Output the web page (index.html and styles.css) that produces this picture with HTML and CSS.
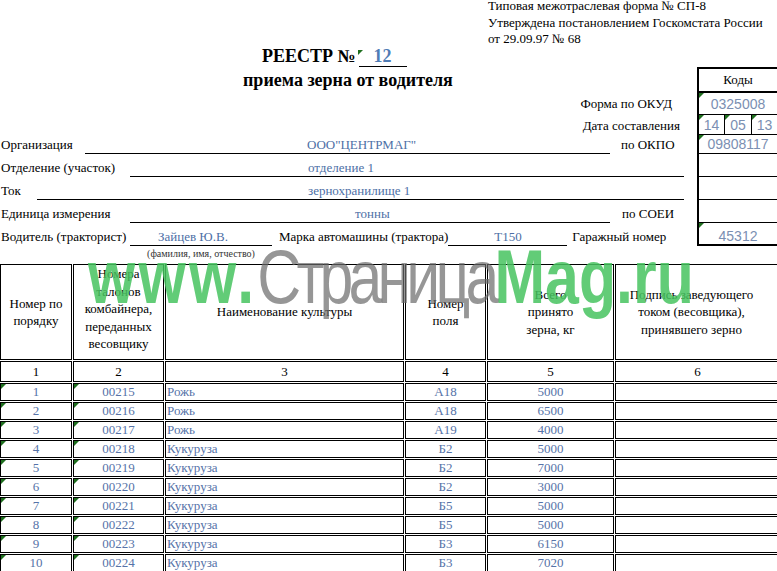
FILE: index.html
```html
<!DOCTYPE html>
<html lang="ru">
<head>
<meta charset="utf-8">
<title>Реестр приема зерна</title>
<link rel="stylesheet" href="styles.css">
</head>
<body>
<div class="page">
  <div class="approval">Типовая межотраслевая форма № СП-8<br>Утверждена постановлением Госкомстата России<br>от 29.09.97 № 68</div>
  <div class="title-row"><span class="title">РЕЕСТР №</span><span class="num-field tri tri-low">12</span></div>

  <div class="frow h-head">
    <div class="fl"><span class="subtitle">приема зерна от водителя</span></div>
    <div class="code code-head">Коды</div>
  </div>
  <div class="frow h-okud">
    <div class="fl fl-right pr-okud"><span class="lbl lbl-up">Форма по ОКУД</span></div>
    <div class="code tri">0325008</div>
  </div>
  <div class="frow h-date">
    <div class="fl fl-right pr-date"><span class="lbl">Дата составления</span></div>
    <div class="code code-split"><span class="tri">14</span><span class="tri">05</span><span class="tri">13</span></div>
  </div>
  <div class="frow h-okpo">
    <div class="fl">
      <span class="lbl w-org">Организация</span>
      <span class="field f-org">ООО"ЦЕНТРМАГ"</span>
      <span class="lbl ml-okpo">по ОКПО</span>
    </div>
    <div class="code tri">09808117</div>
  </div>
  <div class="frow h-row">
    <div class="fl">
      <span class="lbl w-130">Отделение (участок)</span>
      <span class="field f-otd">отделение 1</span>
    </div>
    <div class="code"></div>
  </div>
  <div class="frow h-row">
    <div class="fl">
      <span class="lbl w-tok">Ток</span>
      <span class="field f-tok">зернохранилище 1</span>
    </div>
    <div class="code"></div>
  </div>
  <div class="frow h-row">
    <div class="fl">
      <span class="lbl w-130">Единица измерения</span>
      <span class="field f-unit">тонны</span>
      <span class="lbl ml-soei">по СОЕИ</span>
    </div>
    <div class="code"></div>
  </div>
  <div class="frow h-row">
    <div class="fl">
      <span class="lbl w-130">Водитель (тракторист)</span>
      <span class="field f-driver">Зайцев Ю.В.</span>
      <span class="lbl ml-car">Марка автомашины (трактора)</span>
      <span class="field f-car">Т150</span>
      <span class="lbl ml-gar">Гаражный номер</span>
    </div>
    <div class="code code-last tri">45312</div>
  </div>
  <div class="fam-row"><span class="fam">(фамилия, имя, отчество)</span></div>

  <table class="reg">
    <colgroup>
      <col class="c1"><col class="c2"><col class="c3"><col class="c4"><col class="c5"><col class="c6">
    </colgroup>
    <tr class="hdr">
      <td>Номер по<br>порядку</td>
      <td class="top">Номера<br>талонов<br>комбайнера,<br>переданных<br>весовщику</td>
      <td>Наименование культуры</td>
      <td>Номер<br>поля</td>
      <td>Всего<br>принято<br>зерна, кг</td>
      <td class="sign">Подпись заведующего<br>током (весовщика),<br>принявшего зерно</td>
    </tr>
    <tr class="nums">
      <td>1</td><td>2</td><td>3</td><td>4</td><td>5</td><td>6</td>
    </tr>
    <tr class="row"><td class="tri">1</td><td class="tri">00215</td><td class="name">Рожь</td><td>А18</td><td>5000</td><td></td></tr>
    <tr class="row"><td class="tri">2</td><td class="tri">00216</td><td class="name">Рожь</td><td>А18</td><td>6500</td><td></td></tr>
    <tr class="row"><td class="tri">3</td><td class="tri">00217</td><td class="name">Рожь</td><td>А19</td><td>4000</td><td></td></tr>
    <tr class="row"><td class="tri">4</td><td class="tri">00218</td><td class="name">Кукуруза</td><td>Б2</td><td>5000</td><td></td></tr>
    <tr class="row"><td class="tri">5</td><td class="tri">00219</td><td class="name">Кукуруза</td><td>Б2</td><td>7000</td><td></td></tr>
    <tr class="row"><td class="tri">6</td><td class="tri">00220</td><td class="name">Кукуруза</td><td>Б2</td><td>3000</td><td></td></tr>
    <tr class="row"><td class="tri">7</td><td class="tri">00221</td><td class="name">Кукуруза</td><td>Б5</td><td>5000</td><td></td></tr>
    <tr class="row"><td class="tri">8</td><td class="tri">00222</td><td class="name">Кукуруза</td><td>Б5</td><td>5000</td><td></td></tr>
    <tr class="row"><td class="tri">9</td><td class="tri">00223</td><td class="name">Кукуруза</td><td>Б3</td><td>6150</td><td></td></tr>
    <tr class="row"><td class="tri">10</td><td class="tri">00224</td><td class="name">Кукуруза</td><td>Б3</td><td>7020</td><td></td></tr>
  </table>

  <div class="wm" aria-hidden="true"><span class="wm-g wm-www">www.</span><span class="wm-s">Страница</span><span class="wm-g">Mag.ru</span></div>
</div>
</body>
</html>
```

FILE: styles.css
```css
html, body {
  margin: 0;
  padding: 0;
  background: #fff;
  overflow: hidden;
}
body {
  width: 777px;
  height: 571px;
  font-family: "Liberation Serif", "Times New Roman", serif;
  font-size: 13px;
  color: #000;
}
.page {
  position: relative;
  display: flow-root;
  width: 777px;
  height: 571px;
  overflow: hidden;
}

/* approval block */
.approval {
  margin-top: -2px;
  height: 49px;
  padding-left: 488px;
  line-height: 16.5px;
  white-space: nowrap;
}

/* title */
.title-row {
  display: flex;
  align-items: flex-end;
  height: 20px;
  padding-left: 262px;
  font-weight: bold;
  font-size: 18px;
}
.title {
  line-height: 19px;
  padding-bottom: 1px;
}
.num-field {
  margin-left: 3px;
  width: 48px;
  line-height: 19px;
  border-bottom: 1px solid #000;
  text-align: center;
  color: #4f7cb5;
}

/* generic rows with codes column */
.frow {
  display: flex;
}
.h-head { height: 26px; }
.h-okud { height: 22px; }
.h-date { height: 20px; }
.h-okpo { height: 19px; }
.h-row  { height: 23px; }

.fl {
  flex: 0 0 697px;
  display: flex;
  align-items: flex-end;
  white-space: nowrap;
}
.fl-right { justify-content: flex-end; }
.pr-okud { padding-right: 25px; box-sizing: border-box; }
.pr-date { padding-right: 17px; box-sizing: border-box; }

.subtitle {
  padding-left: 243px;
  padding-bottom: 3px;
  font-weight: bold;
  font-size: 18px;
  line-height: 19px;
}
.lbl {
  line-height: 16px;
  border-bottom: 1px solid transparent;
}
.lbl-up { padding-bottom: 2px; }
.field {
  box-sizing: border-box;
  line-height: 16px;
  border-bottom: 1px solid #000;
  color: #4d6fa6;
}
.w-org { width: 85px; padding-left: 1px; box-sizing: border-box; }
.w-130 { width: 130px; padding-left: 1px; box-sizing: border-box; }
.w-tok { width: 37px; padding-left: 1px; box-sizing: border-box; }
.f-org { width: 525px; padding-left: 222px; }
.f-otd { width: 554px; padding-left: 178px; }
.f-tok { width: 647px; padding-left: 271px; }
.f-unit { width: 480px; padding-left: 225px; }
.f-driver { width: 142px; padding-left: 28px; }
.f-car { width: 119px; padding-left: 46px; }
.ml-okpo { margin-left: 11px; }
.ml-soei { margin-left: 12px; }
.ml-car { margin-left: 7px; }
.ml-gar { margin-left: 5px; }

/* codes column */
.code {
  flex: 0 0 80px;
  box-sizing: border-box;
  border-left: 2px solid #000;
  border-bottom: 1px solid #000;
  display: flex;
  align-items: center;
  justify-content: center;
  font-family: "Liberation Sans", Arial, sans-serif;
  font-size: 14px;
  color: #7b8fb2;
}
.code-head {
  border-top: 2px solid #000;
  border-bottom: 2px solid #000;
  font-family: "Liberation Serif", "Times New Roman", serif;
  font-size: 13px;
  color: #000;
}
.code-last {
  border-bottom: 2px solid #000;
  padding-top: 4px;
}
.code-split {
  justify-content: flex-start;
  align-items: stretch;
}
.code-split span {
  display: flex;
  align-items: center;
  justify-content: center;
  box-sizing: border-box;
}
.code-split span:nth-child(1) { width: 26px; border-right: 1px solid #000; }
.code-split span:nth-child(2) { width: 27px; border-right: 1px solid #000; }
.code-split span:nth-child(3) { flex: 1; }

/* small caption */
.fam-row {
  height: 17px;
  display: flex;
  padding-left: 130px;
}
.fam {
  width: 142px;
  text-align: center;
  font-size: 10px;
  line-height: 14px;
  padding-top: 1px;
  color: #333;
  white-space: nowrap;
}

/* green corner marks */
.tri { position: relative; }
.tri::before {
  content: "";
  position: absolute;
  left: 0;
  top: 0;
  border-top: 5px solid #1f6f1f;
  border-right: 5px solid transparent;
}
.tri-low::before { top: 3px; left: -1px; }

/* register table */
.reg {
  margin-left: -1px;
  width: 782px;
  table-layout: fixed;
  border-collapse: separate;
  border-spacing: 1px;
  font-size: 13px;
}
.c1 { width: 72px; }
.c2 { width: 91px; }
.c3 { width: 239px; }
.c4 { width: 81px; }
.c5 { width: 127px; }
.c6 { width: 165px; }
.reg td {
  box-sizing: border-box;
  border: 1px solid #000;
  padding: 0;
  text-align: center;
  vertical-align: middle;
  white-space: nowrap;
}
.hdr td {
  height: 96px;
  line-height: 17.5px;
}
.hdr td.top { vertical-align: top; }
.hdr td.sign { padding-right: 12px; }
.nums td {
  height: 21px;
  line-height: 19px;
}
.row td {
  height: 18px;
  line-height: 16px;
  color: #5673a8;
}
.row td.name {
  text-align: left;
  padding-left: 1px;
}

/* watermark overlay */
.wm {
  position: absolute;
  left: 88px;
  top: 239px;
  font-family: "Liberation Sans", Arial, sans-serif;
  font-weight: bold;
  font-size: 76px;
  line-height: 1;
  white-space: nowrap;
  transform: scaleX(0.8);
  transform-origin: 0 0;
  pointer-events: none;
}
.wm-g { color: rgba(70, 195, 95, 0.85); }
.wm-www { letter-spacing: 4px; }
.wm-s { color: rgba(105, 105, 105, 0.7); font-weight: normal; letter-spacing: -6px; }
```
